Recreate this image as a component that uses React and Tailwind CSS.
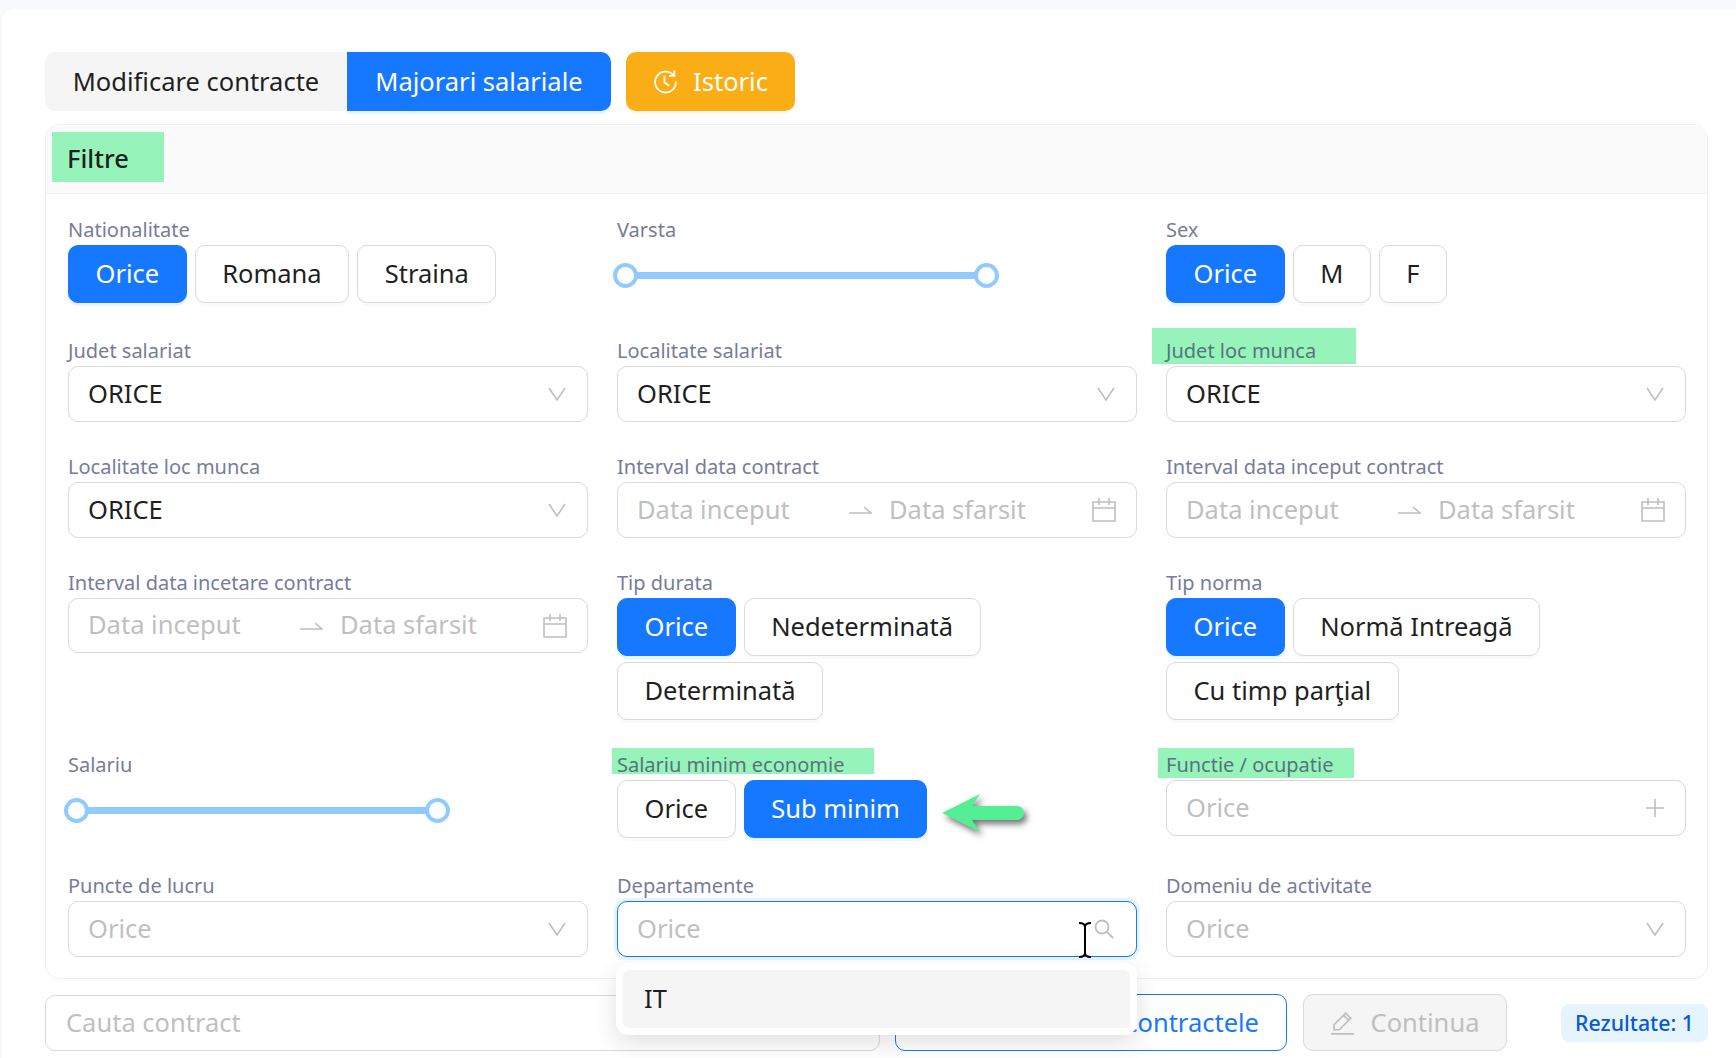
function Field({ label, mark, children }) {
  return (
    <div>
      <div
        className={[
          "relative mb-1 h-[22px] text-[20px] leading-[22px]",
          mark ? "text-[#55747a]" : "text-[#767c99]",
        ].join(" ")}
      >
        {mark}
        <span className="relative">{label}</span>
      </div>
      {children}
    </div>
  );
}

function Opt({ children, on }) {
  return (
    <button
      className={[
        "h-[58px] rounded-[10px] border px-[26.5px] pb-[2px] text-[25.5px]",
        on
          ? "border-[#1677ff] bg-[#1677ff] text-white shadow-[0_3px_0_rgba(5,145,255,0.1)]"
          : "border-[#d9d9d9] bg-white text-[#1f1f1f] shadow-[0_3px_0_rgba(0,0,0,0.02)]",
      ].join(" ")}
    >
      {children}
    </button>
  );
}

function Opts({ children }) {
  return <div className="flex flex-wrap items-center gap-x-2 gap-y-[6px]">{children}</div>;
}

function Chevron() {
  return (
    <svg width="18" height="14" viewBox="0 0 18 14" fill="none" stroke="#bfbfbf" strokeWidth="1.6">
      <path d="M1 1l8 12 8-12" />
    </svg>
  );
}

function Select({ value, placeholder }) {
  return (
    <div className="flex h-[56px] items-center justify-between rounded-[10px] border border-[#d9d9d9] bg-white pl-[19px] pr-[21px] text-[25.5px]">
      {value ? (
        <span className="pb-[2px] text-[#1f1f1f]">{value}</span>
      ) : (
        <span className="pb-[2px] text-[#bfbfbf]">{placeholder}</span>
      )}
      <Chevron />
    </div>
  );
}

function DateRange({ short }) {
  return (
    <div
      className={[
        "flex items-center rounded-[10px] border border-[#d9d9d9] bg-white pl-[19px] pr-[20px] text-[25.5px] text-[#bfbfbf]",
        short ? "h-[55px]" : "h-[56px]",
      ].join(" ")}
    >
      <span className="w-[212px] pb-[2px]">Data inceput</span>
      <svg width="23" height="10" viewBox="0 0 23 10" fill="none" stroke="#bfbfbf" strokeWidth="1.6">
        <path d="M0 8h22l-7-6" />
      </svg>
      <span className="ml-[17px] flex-1 pb-[2px]">Data sfarsit</span>
      <svg width="24" height="24" viewBox="0 0 24 24" fill="none" stroke="#bfbfbf" strokeWidth="1.6">
        <path d="M1 4h22v19H1zM1 10h22M7 0v7M17 0v7" />
      </svg>
    </div>
  );
}

function Slider({ top }) {
  return (
    <div className={["flex h-[57px] items-center", top].join(" ")}>
      <div className="relative -ml-[4px] h-[25px] w-[386px]">
        <div className="absolute inset-x-3 top-[9px] h-[7px] bg-[#91caff]" />
        <div className="absolute left-0 top-0 size-[25px] rounded-full border-4 border-[#91caff] bg-white" />
        <div className="absolute right-0 top-0 size-[25px] rounded-full border-4 border-[#91caff] bg-white" />
      </div>
    </div>
  );
}

export default function App() {
  const mark = "absolute bg-[#96f4bb]";

  return (
    <div className="h-screen overflow-hidden bg-[#f8f9fd] pl-[2px] pt-[9px] font-['Noto_Sans',sans-serif]">
      <div className="h-full rounded-tl-xl bg-white pl-[43px] pr-[28px] pt-[43px]">
        {/* Tabs */}
        <div className="flex">
          <div className="flex h-[59px] rounded-[10px] bg-[#f5f5f5] text-[25.5px]">
            <div className="flex w-[302px] items-center justify-center text-[#1f1f1f]">Modificare contracte</div>
            <div className="flex w-[264px] items-center justify-center rounded-r-[10px] bg-[#1677ff] text-white shadow-[0_3px_0_rgba(5,145,255,0.1)]">
              Majorari salariale
            </div>
          </div>
          <div className="ml-[15px] flex h-[59px] w-[169px] items-center justify-center gap-[15px] rounded-[10px] bg-[#faad14] text-[25.5px] text-white shadow-[0_3px_0_rgba(255,197,61,0.1)]">
            <svg width="25" height="25" viewBox="0 0 24 24" fill="none" stroke="currentColor" strokeWidth="1.7">
              <path d="M19.6 6A10 10 0 1 0 22 12M20.5 1.5V6.5H15.5M11 6.5V13l4.5 3" />
            </svg>
            Istoric
          </div>
        </div>

        {/* Filtre */}
        <div className="mt-[13px] rounded-[14px] border border-[#f0f0f0]">
          <div className="relative flex h-[69px] items-center rounded-t-[14px] border-b border-[#f0f0f0] bg-[#fafafa] pb-[2px] pl-[21px] text-[25.5px] font-medium text-[#1f1f1f]">
            <div className={`${mark} left-[6px] top-[7px] h-[50px] w-[112px]`} />
            <span className="relative">Filtre</span>
          </div>

          <div className="pb-[21px] pl-[22px] pr-[21px] pt-[25px]">
            <div className="grid grid-cols-3 gap-x-[29px]">
              <Field label="Nationalitate">
                <Opts>
                  <Opt on>Orice</Opt>
                  <Opt>Romana</Opt>
                  <Opt>Straina</Opt>
                </Opts>
              </Field>
              <Field label="Varsta">
                <Slider top="pt-[4px]" />
              </Field>
              <Field label="Sex">
                <Opts>
                  <Opt on>Orice</Opt>
                  <Opt>M</Opt>
                  <Opt>F</Opt>
                </Opts>
              </Field>
            </div>

            <div className="mt-[37px] grid grid-cols-3 gap-x-[29px]">
              <Field label="Judet salariat">
                <Select value="ORICE" />
              </Field>
              <Field label="Localitate salariat">
                <Select value="ORICE" />
              </Field>
              <Field
                label="Judet loc munca"
                mark={<div className={`${mark} -left-[14px] -top-[12px] h-[36px] w-[204px]`} />}
              >
                <Select value="ORICE" />
              </Field>
            </div>

            <div className="mt-[34px] grid grid-cols-3 gap-x-[29px]">
              <Field label="Localitate loc munca">
                <Select value="ORICE" />
              </Field>
              <Field label="Interval data contract">
                <DateRange />
              </Field>
              <Field label="Interval data inceput contract">
                <DateRange />
              </Field>
            </div>

            <div className="mt-[34px] grid grid-cols-3 gap-x-[29px]">
              <Field label="Interval data incetare contract">
                <DateRange short />
              </Field>
              <Field label="Tip durata">
                <Opts>
                  <Opt on>Orice</Opt>
                  <Opt>Nedeterminată</Opt>
                  <Opt>Determinată</Opt>
                </Opts>
              </Field>
              <Field label="Tip norma">
                <Opts>
                  <Opt on>Orice</Opt>
                  <Opt>Normă Intreagă</Opt>
                  <Opt>Cu timp parţial</Opt>
                </Opts>
              </Field>
            </div>

            <div className="mt-[34px] grid grid-cols-3 gap-x-[29px]">
              <Field label="Salariu">
                <Slider top="pt-[3px]" />
              </Field>
              <Field
                label="Salariu minim economie"
                mark={<div className={`${mark} -left-[5px] -top-[6px] h-[26px] w-[262px]`} />}
              >
                <div className="flex items-center">
                  <Opts>
                    <Opt>Orice</Opt>
                    <Opt on>Sub minim</Opt>
                  </Opts>
                  <svg
                    width="84"
                    height="40"
                    viewBox="0 0 84 40"
                    className="ml-[14px] mt-[8px] drop-shadow-[3px_4px_3px_rgba(0,0,0,0.55)]"
                  >
                    <path d="M1 20L39 1l-8 12h45a7 7 0 0 1 0 14H31l8 12z" fill="#54ef95" />
                  </svg>
                </div>
              </Field>
              <Field
                label="Functie / ocupatie"
                mark={<div className={`${mark} -left-[8px] -top-[6px] h-[30px] w-[196px]`} />}
              >
                <div className="flex h-[56px] items-center justify-between rounded-[10px] border border-[#d9d9d9] bg-white pl-[19px] pr-[21px] text-[25.5px] text-[#bfbfbf]">
                  <span className="pb-[2px]">Orice</span>
                  <svg width="18" height="18" viewBox="0 0 18 18" fill="none" stroke="#bfbfbf" strokeWidth="1.6">
                    <path d="M9 0v18M0 9h18" />
                  </svg>
                </div>
              </Field>
            </div>

            <div className="mt-[37px] grid grid-cols-3 gap-x-[29px]">
              <Field label="Puncte de lucru">
                <Select placeholder="Orice" />
              </Field>
              <Field label="Departamente">
                <div className="relative">
                  <div className="relative flex h-[56px] items-center justify-between rounded-[10px] border border-[#1677ff] bg-white pl-[19px] pr-[22px] text-[25.5px] text-[#bfbfbf] shadow-[0_0_0_3px_rgba(5,145,255,0.1)]">
                    <span className="pb-[2px]">Orice</span>
                    <svg width="20" height="20" viewBox="0 0 20 20" fill="none" stroke="#bfbfbf" strokeWidth="1.8">
                      <circle cx="8" cy="8" r="6.5" />
                      <path d="M13 13l6 6" />
                    </svg>
                    <svg width="14" height="36" viewBox="0 0 14 36" fill="none" stroke="#000" strokeWidth="2" className="absolute right-[44px] top-[20px]">
                      <path d="M1 1c3 0 6 1 6 4v26c0 3-3 4-6 4M13 1c-3 0-6 1-6 4v26c0 3 3 4 6 4" />
                    </svg>
                  </div>
                  <div className="absolute -left-px right-0 top-[62px] z-10 rounded-[12px] bg-white p-[7px] shadow-[0_8px_24px_rgba(0,0,0,0.12)]">
                    <div className="flex h-[58px] items-center rounded-[6px] bg-[#f5f5f5] px-[21px] pb-[2px] text-[25.5px] text-[#1f1f1f]">IT</div>
                  </div>
                </div>
              </Field>
              <Field label="Domeniu de activitate">
                <Select placeholder="Orice" />
              </Field>
            </div>
          </div>
        </div>

        {/* Actions */}
        <div className="mt-[15px] flex items-center text-[25.5px]">
          <div className="flex h-[56px] w-[835px] items-center rounded-[10px] border border-[#d9d9d9] bg-white pl-5 text-[#bfbfbf]">
            Cauta contract
          </div>
          <button className="ml-[15px] h-[57px] w-[392px] whitespace-nowrap rounded-[10px] border border-[#1677ff] bg-white pr-[27px] text-right text-[#1677ff]">
            Selecteaza toate contractele
          </button>
          <button className="ml-[16px] flex h-[57px] w-[204px] items-center justify-center gap-4 rounded-[10px] border border-[#d9d9d9] bg-[#f5f5f5] text-[#bfbfbf]">
            <svg width="24" height="24" viewBox="0 0 23 23" fill="none" stroke="#bfbfbf" strokeWidth="1.6">
              <path d="M0 22h22M3 18v-5L14 2l5 5L8 18zM12 4l5 5" />
            </svg>
            Continua
          </button>
          <div className="ml-auto flex h-[38px] w-[147px] items-center justify-center rounded-[8px] bg-[#e6f4ff] text-[21.3px] font-medium text-[#0958d9]">
            Rezultate: 1
          </div>
        </div>
      </div>
    </div>
  );
}
